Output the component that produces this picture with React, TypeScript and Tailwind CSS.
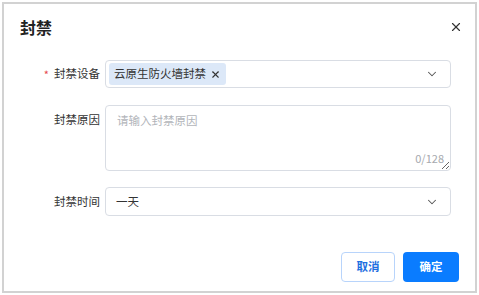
import { X, ChevronDown } from "lucide-react";

const font = { fontFamily: '"Noto Sans CJK SC", "Noto Sans", sans-serif' };

export default function App() {
  return (
    <div className="w-[479px] h-[295px] bg-white p-[2px]" style={font}>
      <div className="h-[291px] w-[475px] border-2 border-[#d2d2d2] flex flex-col">
        {/* header */}
        <div className="flex items-center justify-between pl-[16px] pr-[12px] pt-[12px]">
          <h1 className="text-[16px] leading-[22px] font-bold text-[#222]">封禁</h1>
          <X className="w-[14px] h-[14px] text-[#333]" strokeWidth={2} />
        </div>

        {/* form */}
        <div className="flex flex-col mt-[22px] pr-[24px] text-[11.5px] text-[#333]">
          <div className="flex items-center">
            <label className="w-[101px] pr-[5px] text-right flex items-center justify-end gap-[5px]">
              <span className="text-[#e5484d] text-[11px] leading-none">*</span>
              封禁设备
            </label>
            <div className="flex-1 h-[28px] border border-[#d9dde4] rounded-[4px] flex items-center pl-[3px] pr-[11px]">
              <span className="h-[22px] bg-[#dce8f8] rounded-[3px] flex items-center pl-[5px] pr-[5px] gap-[4px] text-[#333]">
                云原生防火墙封禁
                <X className="w-[11px] h-[11px] text-[#333]" strokeWidth={2.4} />
              </span>
              <ChevronDown className="ml-auto w-[14px] h-[14px] text-[#555]" strokeWidth={1.8} />
            </div>
          </div>

          <div className="flex items-start mt-[17px]">
            <label className="w-[101px] pr-[5px] text-right pt-[6px]">封禁原因</label>
            <div className="flex-1 relative">
              <textarea
                placeholder="请输入封禁原因"
                className="block w-full h-[66px] border border-[#d9dde4] rounded-[4px] px-[11px] py-[6px] text-[11.5px] placeholder-[#b2b5ba] outline-none resize-y"
              />
              <span className="absolute right-[7px] bottom-[5px] text-[11px] text-[#a6a9ae]">0/128</span>
            </div>
          </div>

          <div className="flex items-center mt-[16px]">
            <label className="w-[101px] pr-[5px] text-right">封禁时间</label>
            <div className="flex-1 h-[29px] border border-[#d9dde4] rounded-[4px] flex items-center pl-[10px] pr-[11px]">
              <span className="text-[#333]">一天</span>
              <ChevronDown className="ml-auto w-[14px] h-[14px] text-[#555]" strokeWidth={1.8} />
            </div>
          </div>
        </div>

        {/* footer */}
        <div className="flex justify-end gap-[8px] mt-[36px] pr-[16px] text-[11.5px] font-bold">
          <button className="w-[54px] h-[30px] rounded-[4px] border border-[#b8d4fb] text-[#1d6fe0] bg-white">
            取消
          </button>
          <button className="w-[56px] h-[30px] rounded-[4px] bg-[#0a7cff] text-white">确定</button>
        </div>
      </div>
    </div>
  );
}
